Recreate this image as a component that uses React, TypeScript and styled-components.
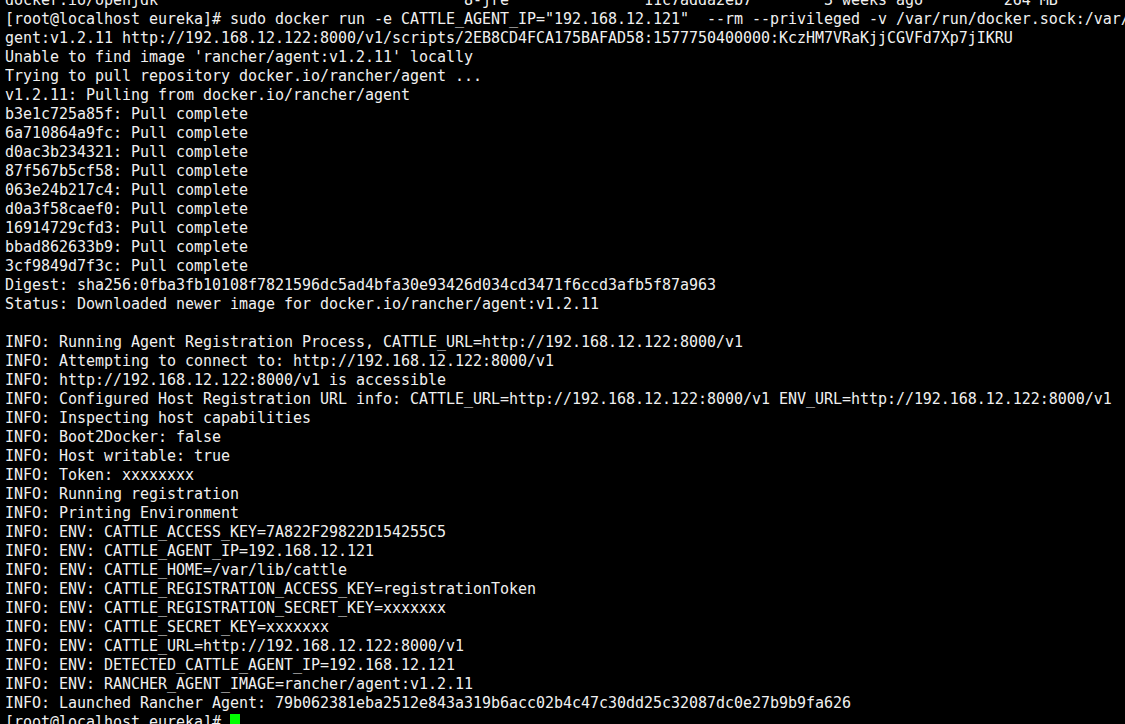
import React from "react";
import styled, { createGlobalStyle } from "styled-components";

const Global = createGlobalStyle`
  html, body {
    margin: 0;
    padding: 0;
    background: #000000;
    overflow: hidden;
  }
  #root {
    height: 724px;
    overflow: hidden;
  }
`;

const Screen = styled.div`
  height: 724px;
  width: 1125px;
  overflow: hidden;
  background: #000000;
  padding: 0 0 0 5px;
  box-sizing: border-box;
`;

const Scroll = styled.div`
  display: flex;
  flex-direction: column;
  margin-top: -9px;
`;

const Line = styled.div`
  height: 19px;
  line-height: 19px;
  font-family: "DejaVu Sans Mono", "Liberation Mono", monospace;
  font-size: 15px;
  letter-spacing: -0.032px;
  color: #f0f0f0;
  white-space: pre;
  overflow: hidden;
`;

const Cursor = styled.span`
  display: inline-block;
  width: 10px;
  height: 17px;
  background: #00ff00;
  vertical-align: top;
  margin-top: 1px;
`;

const pad = (s: string, n: number) => s + " ".repeat(Math.max(0, n - s.length));

const lines: string[] = [
  pad("docker.io/openjdk", 51) + pad("8-jre", 20) + pad("11c7adda2eb7", 20) + pad("3 weeks ago", 20) + "264 MB",
  '[root@localhost eureka]# sudo docker run -e CATTLE_AGENT_IP="192.168.12.121"  --rm --privileged -v /var/run/docker.sock:/var/run/docker.sock -v /var/lib/rancher:/var/lib/rancher rancher/a',
  "gent:v1.2.11 http://192.168.12.122:8000/v1/scripts/2EB8CD4FCA175BAFAD58:1577750400000:KczHM7VRaKjjCGVFd7Xp7jIKRU",
  "Unable to find image 'rancher/agent:v1.2.11' locally",
  "Trying to pull repository docker.io/rancher/agent ...",
  "v1.2.11: Pulling from docker.io/rancher/agent",
  "b3e1c725a85f: Pull complete",
  "6a710864a9fc: Pull complete",
  "d0ac3b234321: Pull complete",
  "87f567b5cf58: Pull complete",
  "063e24b217c4: Pull complete",
  "d0a3f58caef0: Pull complete",
  "16914729cfd3: Pull complete",
  "bbad862633b9: Pull complete",
  "3cf9849d7f3c: Pull complete",
  "Digest: sha256:0fba3fb10108f7821596dc5ad4bfa30e93426d034cd3471f6ccd3afb5f87a963",
  "Status: Downloaded newer image for docker.io/rancher/agent:v1.2.11",
  "",
  "INFO: Running Agent Registration Process, CATTLE_URL=http://192.168.12.122:8000/v1",
  "INFO: Attempting to connect to: http://192.168.12.122:8000/v1",
  "INFO: http://192.168.12.122:8000/v1 is accessible",
  "INFO: Configured Host Registration URL info: CATTLE_URL=http://192.168.12.122:8000/v1 ENV_URL=http://192.168.12.122:8000/v1",
  "INFO: Inspecting host capabilities",
  "INFO: Boot2Docker: false",
  "INFO: Host writable: true",
  "INFO: Token: xxxxxxxx",
  "INFO: Running registration",
  "INFO: Printing Environment",
  "INFO: ENV: CATTLE_ACCESS_KEY=7A822F29822D154255C5",
  "INFO: ENV: CATTLE_AGENT_IP=192.168.12.121",
  "INFO: ENV: CATTLE_HOME=/var/lib/cattle",
  "INFO: ENV: CATTLE_REGISTRATION_ACCESS_KEY=registrationToken",
  "INFO: ENV: CATTLE_REGISTRATION_SECRET_KEY=xxxxxxx",
  "INFO: ENV: CATTLE_SECRET_KEY=xxxxxxx",
  "INFO: ENV: CATTLE_URL=http://192.168.12.122:8000/v1",
  "INFO: ENV: DETECTED_CATTLE_AGENT_IP=192.168.12.121",
  "INFO: ENV: RANCHER_AGENT_IMAGE=rancher/agent:v1.2.11",
  "INFO: Launched Rancher Agent: 79b062381eba2512e843a319b6acc02b4c47c30dd25c32087dc0e27b9b9fa626",
];

export default function App() {
  return (
    <>
      <Global />
      <Screen>
        <Scroll>
          {lines.map((l, i) => (
            <Line key={i}>{l === "" ? " " : l}</Line>
          ))}
          <Line>
            {"[root@localhost eureka]# "}
            <Cursor />
          </Line>
        </Scroll>
      </Screen>
    </>
  );
}
